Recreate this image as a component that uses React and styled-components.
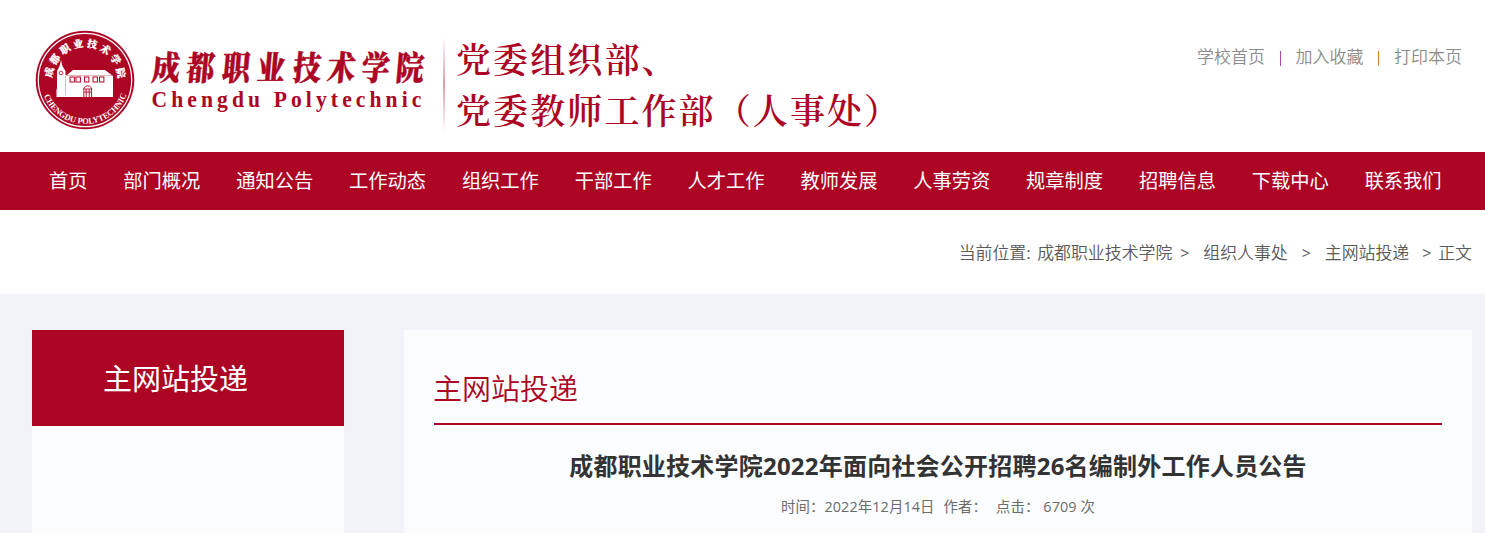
import React from "react";
import styled, { createGlobalStyle } from "styled-components";

const red = "#ad0625";
const sans = `"Open Sans", "Noto Sans CJK SC", sans-serif`;
const serif = `"Noto Serif CJK SC", "Noto Sans CJK SC", serif`;

const GlobalStyle = createGlobalStyle`
  body {
    margin: 0;
    background: #fff;
    font-family: ${sans};
    overflow: hidden;
  }
`;

const Page = styled.div`
  height: 533px;
  display: flex;
  flex-direction: column;
  overflow: hidden;
`;

const Header = styled.header`
  height: 152px;
  flex: none;
  display: flex;
  justify-content: space-between;
  padding: 0 23px 0 35px;
  box-sizing: border-box;
`;

const Brand = styled.div`
  display: flex;
  align-items: flex-start;
  color: ${red};
`;

const SealIcon = styled.svg`
  width: 100px;
  height: 100px;
  margin-top: 30px;
`;

const SchoolName = styled.svg`
  width: 284px;
  height: 80px;
  margin: 40px 0 0 14px;
  fill: ${red};
`;

const Divider = styled.div`
  width: 2px;
  height: 96px;
  margin: 36px 0 0 10px;
  background: linear-gradient(rgba(173, 6, 37, 0), rgba(173, 6, 37, 0.4), rgba(173, 6, 37, 0));
`;

const Department = styled.div`
  margin: 33px 0 0 11px;
  font-family: ${serif};
  font-size: 35px;
  font-weight: 600;
  line-height: 51px;
  letter-spacing: 2.1px;
  white-space: nowrap;
`;

const TopLinks = styled.div`
  display: flex;
  height: 24px;
  margin-top: 45px;
  font-size: 17px;
  font-weight: 350;
  line-height: 24px;
  color: #8c8c8c;
  white-space: nowrap;
`;

const Bar = styled.span`
  width: 1px;
  height: 15px;
  margin: 6px 15px 0 14.5px;
  background: ${props => props.color};
`;

const Nav = styled.nav`
  height: 58px;
  flex: none;
  display: flex;
  gap: 35.85px;
  padding-left: 49px;
  background: ${red};
  color: #fff;
  font-size: 19.25px;
  line-height: 58px;
  white-space: nowrap;
`;

const Breadcrumb = styled.div`
  height: 84px;
  flex: none;
  display: flex;
  justify-content: flex-end;
  padding-right: 13px;
  font-size: 16.9px;
  font-weight: 350;
  line-height: 86px;
  color: #5a5a5a;
  white-space: pre;
`;

const Colon = styled.span`
  width: 11px;
  font-weight: 400;
`;

const Arrow = styled.span`
  width: 10px;
  margin: 0 ${props => props.right}px 0 ${props => props.left}px;
  font-size: 16px;
  font-weight: 400;
`;

const Main = styled.main`
  flex: 1;
  display: flex;
  gap: 60px;
  padding: 36px 13px 0 32px;
  background: #f2f3f8;
`;

const Sidebar = styled.aside`
  width: 312px;
  background: #fafcfe;
`;

const SidebarTitle = styled.h2`
  height: 96px;
  margin: 0;
  padding-left: 71px;
  background: ${red};
  color: #fff;
  font-size: 29px;
  font-weight: 400;
  line-height: 97px;
`;

const Article = styled.article`
  flex: 1;
  padding: 0 30px;
  background: #fafcfe;
`;

const SectionTitle = styled.h2`
  height: 93px;
  margin: 0 0 0 -1px;
  color: ${red};
  font-size: 29px;
  font-weight: 350;
  line-height: 117px;
`;

const Rule = styled.div`
  height: 2px;
  background: ${red};
`;

const ArticleTitle = styled.h1`
  margin: 23px 0 0;
  color: #333;
  font-size: 24px;
  font-weight: 700;
  line-height: 36px;
  letter-spacing: 0.22px;
  text-align: center;
  white-space: nowrap;
`;

const Meta = styled.div`
  display: flex;
  justify-content: center;
  gap: 9px;
  margin-top: 12px;
  color: #6c6c6c;
  font-size: 14.4px;
  font-weight: 400;
  line-height: 22px;
  letter-spacing: 0.1px;
  white-space: pre;
`;

const navItems = [
  "首页",
  "部门概况",
  "通知公告",
  "工作动态",
  "组织工作",
  "干部工作",
  "人才工作",
  "教师发展",
  "人事劳资",
  "规章制度",
  "招聘信息",
  "下载中心",
  "联系我们"
];

const windows = [-15, -9, -0.5, 8, 14.5];

const Seal = () => (
  <SealIcon viewBox="-50 -50 100 100">
    <defs>
      <path id="arcTop" d="M-33 0 A33 33 0 0 1 33 0" />
      <path id="arcBottom" d="M-44 0 A44 44 0 0 0 44 0" />
    </defs>
    <circle r="49.3" fill={red} />
    <circle r="46.7" fill="none" stroke="#fff" strokeWidth="1.2" />
    <path
      d="M-24 -20 L-22.6 -14 L-19.5 -9 V-5 H-18 L-12 -10 H20 L28 -4 V17 H-28.5 V9 H-28 V-9 L-25.4 -14 Z"
      fill="#fff"
    />
    <circle cx="-24" cy="-7" r="1.8" fill="none" stroke={red} strokeWidth="0.8" />
    <path d="M-19.5 -4 V15 M-19 -4.5 H27" stroke={red} strokeWidth="0.5" opacity="0.6" />
    {windows.map(x => (
      <rect key={x} x={x} y="-3" width="4.4" height="5" fill="none" stroke={red} />
    ))}
    <path
      d="M-1.2 17 V8 Q2.7 3.5 6.6 8 V17 M-1 9 H6.5 M-1 12 H6.5 M1.2 9 V17 M4.2 9 V17"
      fill="none"
      stroke={red}
      strokeWidth="0.9"
    />
    <text
      fill="#fff"
      stroke="#fff"
      strokeWidth="0.3"
      fontFamily={serif}
      fontSize="10"
      fontWeight="900"
    >
      <textPath href="#arcTop" startOffset="2" textLength="100">
        成都职业技术学院
      </textPath>
    </text>
    <text fill="#fff" fontFamily="Liberation Serif" fontSize="8.6" fontWeight="700">
      <textPath
        href="#arcBottom"
        startOffset="16"
        textLength="107"
        lengthAdjust="spacingAndGlyphs"
      >
        CHENGDU POLYTECHNIC
      </textPath>
    </text>
  </SealIcon>
);

const App = () => {
  return (
    <Page>
      <GlobalStyle />
      <Header>
        <Brand>
          <Seal />
          <SchoolName viewBox="0 0 284 80">
            <text
              transform="translate(2 40) skewX(-5) scale(0.9 1.08)"
              fontFamily={serif}
              fontSize="31"
              fontWeight="900"
              stroke={red}
              strokeWidth="0.5"
              x="0 38.5 78 117 157 195 233 271"
            >
              成都职业技术学院
            </text>
            <text
              transform="translate(2.5 67) scale(0.9 1)"
              fontFamily="Liberation Serif"
              fontSize="24"
              fontWeight="700"
              letterSpacing="4.55"
            >
              Chengdu Polytechnic
            </text>
          </SchoolName>
          <Divider />
          <Department>
            党委组织部、
            <br />
            党委教师工作部（人事处）
          </Department>
        </Brand>
        <TopLinks>
          <span>学校首页</span>
          <Bar color="#b04bb0" />
          <span>加入收藏</span>
          <Bar color="#d98324" />
          <span>打印本页</span>
        </TopLinks>
      </Header>
      <Nav>
        {navItems.map(item => (
          <span key={item}>{item}</span>
        ))}
      </Nav>
      <Breadcrumb>
        <span>当前位置</span>
        <Colon>:</Colon>
        <span>成都职业技术学院</span>
        <Arrow left={8} right={13}>&gt;</Arrow>
        <span>组织人事处</span>
        <Arrow left={14} right={13}>&gt;</Arrow>
        <span>主网站投递</span>
        <Arrow left={13} right={6}>&gt;</Arrow>
        <span>正文</span>
      </Breadcrumb>
      <Main>
        <Sidebar>
          <SidebarTitle>主网站投递</SidebarTitle>
        </Sidebar>
        <Article>
          <SectionTitle>主网站投递</SectionTitle>
          <Rule />
          <ArticleTitle>成都职业技术学院2022年面向社会公开招聘26名编制外工作人员公告</ArticleTitle>
          <Meta>
            <span>时间：2022年12月14日</span>
            <span>作者：</span>
            <span>点击： 6709 次</span>
          </Meta>
        </Article>
      </Main>
    </Page>
  );
};

export default App;
